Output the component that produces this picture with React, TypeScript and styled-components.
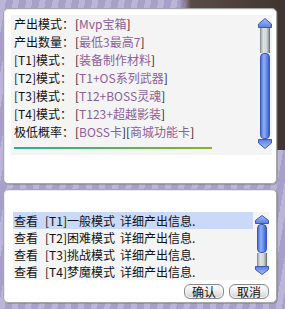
import styled, { createGlobalStyle } from 'styled-components'

const GlobalStyle = createGlobalStyle`
  html, body {
    margin: 0;
    padding: 0;
  }

  body {
    width: 285px;
    height: 309px;
    overflow: hidden;
    font-family: "Noto Sans CJK SC", "DejaVu Sans", sans-serif;
    font-size: 12px;
    color: #111;
    background:
      linear-gradient(to right, rgba(0, 0, 0, 0) 63%, #5a4b47 67%, #3f3431 100%) top left / 100% 150px no-repeat,
      repeating-linear-gradient(100deg, rgba(255, 255, 255, 0.12) 0 6px, rgba(90, 80, 130, 0.12) 6px 13px),
      #b2abd3;
  }
`

interface DropRow {
  label: string;
  values: string[];
}

const DROP_ROWS: DropRow[] = [
  { label: '产出模式：', values: ['Mvp宝箱'] },
  { label: '产出数量：', values: ['最低3最高7'] },
  { label: '[T1]模式：', values: ['装备制作材料'] },
  { label: '[T2]模式：', values: ['T1+OS系列武器'] },
  { label: '[T3]模式：', values: ['T12+BOSS灵魂'] },
  { label: '[T4]模式：', values: ['T123+超越影装'] },
  { label: '极低概率：', values: ['BOSS卡', '商城功能卡'] },
]

const MODES = [
  { tier: 'T1', name: '一般模式' },
  { tier: 'T2', name: '困难模式' },
  { tier: 'T3', name: '挑战模式' },
  { tier: 'T4', name: '梦魔模式' },
]

const Window = styled.div`
  display: flex;
  flex-direction: column;
  gap: 5px;
  padding: 8px 0 0 3px;
  width: 274px;
`

const Panel = styled.div<{ $padding: string }>`
  box-sizing: border-box;
  width: 274px;
  padding: ${({ $padding }) => $padding};
  background: #fff;
  border: 1px solid #a6a6a6;
  border-radius: 5px;
  box-shadow: inset 1px 1px 0 #ececec, 1px 1px 0 rgba(120, 120, 120, 0.45);
`

const InfoBox = styled.div`
  display: flex;
  height: 140px;
  background: #f4f4f4;
`

const InfoList = styled.div`
  flex: 1;
  padding: 0 0 0 3px;
`

const InfoRow = styled.div`
  display: flex;
  height: 18px;
  line-height: 18px;
  white-space: nowrap;
`

const Label = styled.span`
  width: 61px;
  flex: none;
`

const Bracket = styled.span`
  color: #222;
`

const Value = styled.span`
  color: #8a5f98;
`

const Divider = styled.div`
  width: 198px;
  height: 2px;
  margin-top: 6px;
  background: linear-gradient(to right, #25b29a, #5fb25a 55%, #8bb22a);
`

const ListBox = styled.div`
  display: flex;
  background: #f4f4f4;
`

const List = styled.div`
  flex: 1;
  padding-right: 2px;
`

const ListRow = styled.div<{ $selected?: boolean }>`
  display: flex;
  height: 17px;
  line-height: 17px;
  padding-left: 1px;
  white-space: nowrap;
  background: ${({ $selected }) => ($selected ? '#c9d9f7' : 'transparent')};
`

const Word = styled.span<{ $gap: number }>`
  margin-right: ${({ $gap }) => $gap}px;
`

const ScrollColumn = styled.div<{ $top: number; $bottom: number }>`
  display: flex;
  flex-direction: column;
  align-items: center;
  width: 14px;
  margin: ${({ $top, $bottom }) => `${$top}px 0 ${$bottom}px`};
`

const ArrowSvg = styled.svg<{ $down?: boolean }>`
  display: block;
  transform: ${({ $down }) => ($down ? 'scaleY(-1)' : 'none')};
`

const Track = styled.div<{ $height: number }>`
  box-sizing: border-box;
  width: 10px;
  height: ${({ $height }) => $height}px;
  background: linear-gradient(to right, #a9b0b0, #dde2e2 30%, #cfd5d5 70%, #8d9494);
  border-left: 1px solid #8c9393;
  border-right: 1px solid #6f7676;
`

const Thumb = styled.div<{ $height: number }>`
  box-sizing: border-box;
  width: 10px;
  height: ${({ $height }) => $height}px;
  border: 1px solid #3857b8;
  border-radius: 4px;
  background: linear-gradient(to right, #4d72d8, #8eaff6 35%, #6d90ea 65%, #3b5dc6);
`

const Footer = styled.div`
  display: flex;
  justify-content: flex-end;
  gap: 5px;
  margin-top: 4px;
`

const Button = styled.button`
  box-sizing: border-box;
  width: 40px;
  height: 15px;
  padding: 0;
  font-family: "Noto Sans CJK SC", sans-serif;
  font-size: 12px;
  line-height: 13px;
  color: #111;
  background: linear-gradient(#ffffff, #ececec 50%, #d2d2d2);
  border: 1px solid #8a8a8a;
  border-radius: 6px;
  box-shadow: inset 0 0 0 1px #f4f4f4;
`

const Arrow = ({ down, h }: { down?: boolean; h: number }) => (
  <ArrowSvg width="14" height={h} viewBox={`0 0 14 ${h}`} $down={down}>
    <defs>
      <linearGradient id="arrowFill" x1="0" y1="0" x2="0" y2="1">
        <stop offset="0" stopColor="#a9c0f6" />
        <stop offset="1" stopColor="#5b7ddc" />
      </linearGradient>
    </defs>
    <polygon points={`7,0.5 13.5,${h * 0.6} 13.5,${h - 0.5} 0.5,${h - 0.5} 0.5,${h * 0.6}`}
             fill="url(#arrowFill)" stroke="#3a58b4" strokeWidth="1" />
  </ArrowSvg>
)

const Scrollbar = ({ top, bottom, arrow, before, thumb, after }: {
  top: number; bottom: number; arrow: number; before: number; thumb: number; after: number;
}) => (
  <ScrollColumn $top={top} $bottom={bottom}>
    <Arrow h={arrow} />
    {before > 0 && <Track $height={before} />}
    <Thumb $height={thumb} />
    {after > 0 && <Track $height={after} />}
    <Arrow h={arrow} down />
  </ScrollColumn>
)

const App = () => (
  <>
    <GlobalStyle />
    <Window>
      <Panel $padding="6px 4px 28px 7px">
        <InfoBox>
          <InfoList>
            {DROP_ROWS.map(row => (
              <InfoRow key={row.label}>
                <Label>{row.label}</Label>
                {row.values.map(value => (
                  <span key={value}>
                    <Bracket>[</Bracket>
                    <Value>{value}</Value>
                    <Bracket>]</Bracket>
                  </span>
                ))}
              </InfoRow>
            ))}
            <Divider />
          </InfoList>
          <Scrollbar top={3} bottom={3} arrow={10} before={25} thumb={86} after={0} />
        </InfoBox>
      </Panel>

      <Panel $padding="22px 7px 3px 9px">
        <ListBox>
          <List>
            {MODES.map((mode, i) => (
              <ListRow key={mode.tier} $selected={i === 0}>
                <Word $gap={7}>查看</Word>
                <Word $gap={5}>[{mode.tier}]{mode.name}</Word>
                <span>详细产出信息.</span>
              </ListRow>
            ))}
          </List>
          <Scrollbar top={3} bottom={4} arrow={9} before={0} thumb={29} after={13} />
        </ListBox>
        <Footer>
          <Button>确认</Button>
          <Button>取消</Button>
        </Footer>
      </Panel>
    </Window>
  </>
)

export default App
